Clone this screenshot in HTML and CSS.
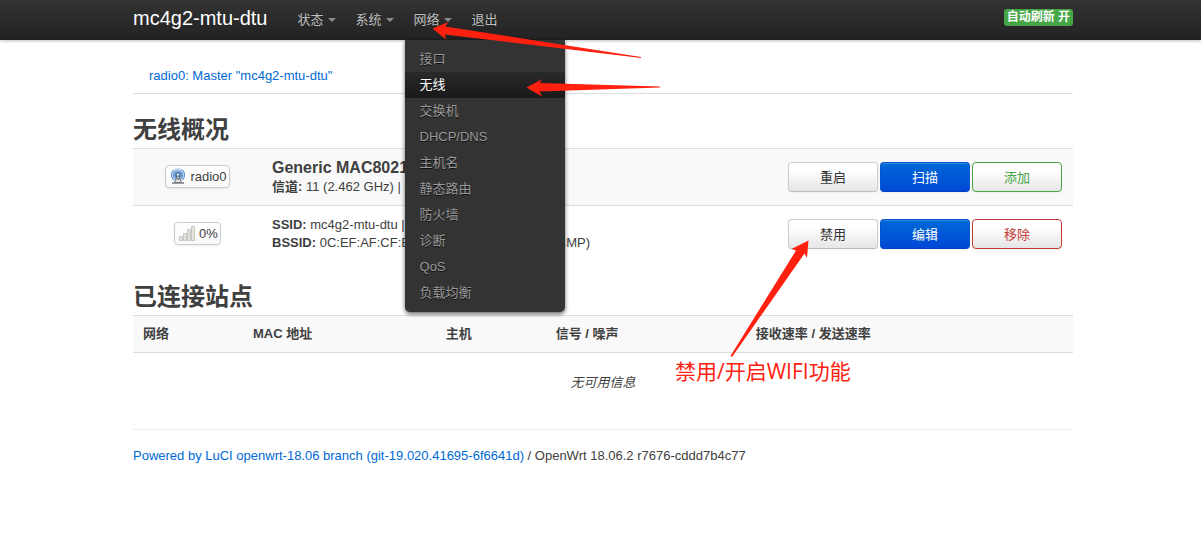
FILE: index.html
```html
<!DOCTYPE html>
<html lang="zh-CN">
<head>
<meta charset="utf-8">
<title>mc4g2-mtu-dtu - 无线 - LuCI</title>
<link rel="stylesheet" href="styles.css">
</head>
<body>
<header class="topbar">
  <div class="container topbar-inner">
    <a class="brand" href="#">mc4g2-mtu-dtu</a>
    <ul class="nav">
      <li><a class="nav-link has-menu" href="#">状态</a></li>
      <li><a class="nav-link has-menu" href="#">系统</a></li>
      <li class="open"><a class="nav-link has-menu" href="#">网络</a>
        <ul class="menu">
          <li><a href="#">接口</a></li>
          <li><a class="current" href="#">无线</a></li>
          <li><a href="#">交换机</a></li>
          <li><a href="#">DHCP/DNS</a></li>
          <li><a href="#">主机名</a></li>
          <li><a href="#">静态路由</a></li>
          <li><a href="#">防火墙</a></li>
          <li><a href="#">诊断</a></li>
          <li><a href="#">QoS</a></li>
          <li><a href="#">负载均衡</a></li>
        </ul>
      </li>
      <li><a class="nav-link" href="#">退出</a></li>
    </ul>
    <button class="refresh" type="button">自动刷新 开</button>
  </div>
</header>

<main class="container">
  <nav class="tabs"><a href="#">radio0: Master "mc4g2-mtu-dtu"</a></nav>

  <section>
    <h2>无线概况</h2>
    <table class="overview">
      <tr class="shaded">
        <td class="status">
          <span class="badge">
            <svg width="16" height="16" viewBox="0 0 16 16" aria-hidden="true">
              <circle cx="8" cy="7" r="7" fill="#c3d8f0"/>
              <circle cx="8" cy="7" r="5" fill="#8fb4df"/>
              <circle cx="8" cy="7" r="3" fill="#4778b5"/>
              <path d="M3.6 1.8a7 7 0 0 0 0 10.2M12.4 1.8a7 7 0 0 1 0 10.2M5.1 3.4a5 5 0 0 0 0 7.2M10.9 3.4a5 5 0 0 1 0 7.2" fill="none" stroke="#5b8fcb"/>
              <path d="M8 7 4.5 14.5h7z" fill="#e4e5e6" stroke="#73777c"/>
              <path d="M6.5 11h3M2 15h12" stroke="#777b80" stroke-width="1.4"/>
              <circle cx="8" cy="6.5" r="1.5" fill="#eef4fa" stroke="#3e6696" stroke-width=".6"/>
            </svg>
            radio0
          </span>
        </td>
        <td class="details"><strong class="device">Generic MAC80211 802.11bgn</strong><br><strong>信道:</strong> 11 (2.462 GHz) | <strong>速率:</strong> 1 Mbit/s</td>
        <td class="actions"><div class="buttons">
          <button class="btn" type="button">重启</button>
          <button class="btn primary" type="button">扫描</button>
          <button class="btn add" type="button">添加</button>
        </div></td>
      </tr>
      <tr>
        <td class="status">
          <span class="badge">
            <svg width="16" height="16" viewBox="0 0 16 16" aria-hidden="true">
              <g fill="#e3e4df" stroke="#c6c8c2">
                <path d="M.5 11.5h3v4h-3zM4.500 8.500h3v7h-3zM8.500 4.500h3v11h-3zM12.500 1.500h3v14h-3z"/>
              </g>
            </svg>
            0%
          </span>
        </td>
        <td class="details"><strong>SSID:</strong> mc4g2-mtu-dtu | <strong>模式:</strong> Master<br><strong>BSSID:</strong> 0C:EF:AF:CF:EA:0A | <strong>加密:</strong> WPA PSK (CCMP)</td>
        <td class="actions"><div class="buttons">
          <button class="btn" type="button">禁用</button>
          <button class="btn primary" type="button">编辑</button>
          <button class="btn remove" type="button">移除</button>
        </div></td>
      </tr>
    </table>
  </section>

  <section>
    <h2>已连接站点</h2>
    <table class="stations">
      <thead>
        <tr class="shaded">
          <th class="col-network">网络</th>
          <th class="col-mac">MAC 地址</th>
          <th class="col-host">主机</th>
          <th class="col-signal">信号 / 噪声</th>
          <th>接收速率 / 发送速率</th>
        </tr>
      </thead>
      <tbody>
        <tr><td class="empty" colspan="5"><em>无可用信息</em></td></tr>
      </tbody>
    </table>
  </section>

  <footer><a href="#">Powered by LuCI openwrt-18.06 branch (git-19.020.41695-6f6641d)</a> / OpenWrt 18.06.2 r7676-cddd7b4c77</footer>
</main>

<div class="notes">
  <div class="container notes-inner">
    <svg class="arrows" width="940" height="400" viewBox="133 0 940 400" aria-hidden="true">
      <g fill="#ff2010">
        <path d="M432.500 28.500 448.500 22 445 26.500 641 57v1L445 34.500 446 39.500z"/>
        <path d="M526.500 87.500 542.500 79 539.500 83 660 86.500v1L539.500 91.500 542 96.500z"/>
        <path d="M808.500 240.500 791.500 249 796 250.500 730.500 356l1.500 1L804.500 253.500 807 258z"/>
      </g>
    </svg>
    <p class="caption">禁用/开启WIFI功能</p>
  </div>
</div>
</body>
</html>
```

FILE: styles.css
```css
* { box-sizing: border-box; }

body {
  margin: 0;
  background: #fff;
  color: #404040;
  font: 13px/18px "Liberation Sans", "Noto Sans CJK SC", sans-serif;
}

a { color: #0069d6; text-decoration: none; }
ul { list-style: none; margin: 0; padding: 0; }
button { font: inherit; cursor: pointer; }

.container {
  max-width: 945px;
  margin: 0 auto;
  padding-left: 5px;
}

/* top bar */
.topbar {
  position: relative;
  z-index: 1;
  height: 40px;
  background: linear-gradient(#333, #222);
  box-shadow: 0 1px 3px rgba(0, 0, 0, .25), inset 0 -1px 0 rgba(0, 0, 0, .1);
}
.topbar-inner { display: flex; align-items: flex-start; }
.brand {
  padding: 8px 20px 12px 0;
  color: #fff;
  font-size: 20px;
  line-height: 20px;
}
.nav { display: flex; }
.nav > li { position: relative; }
.nav-link {
  display: flex;
  align-items: center;
  padding: 10px;
  color: #bfbfbf;
  line-height: 20px;
  text-shadow: 0 -1px 0 rgba(0, 0, 0, .25);
}
.has-menu::after {
  content: "";
  margin-left: 4px;
  border: 4px solid transparent;
  border-top-color: #8a8a8a;
  border-bottom: 0;
}
.menu {
  position: absolute;
  top: 40px;
  left: 1px;
  width: 160px;
  padding: 6px 0;
  background: #333;
  border-radius: 0 0 5px 5px;
  box-shadow: 0 2px 4px rgba(0, 0, 0, .6);
}
.menu a {
  display: block;
  padding: 4px 15px;
  color: #999;
  text-shadow: 0 1px 0 #111;
}
.menu .current {
  color: #fff;
  background: linear-gradient(#292929, #191919);
}
.refresh {
  margin: 9px 0 0 auto;
  padding: 0 3px;
  border: 0;
  border-radius: 3px;
  background: #46a546;
  color: #fff;
  font-size: 12px;
  font-weight: bold;
  line-height: 17px;
}

/* content */
.tabs {
  padding: 27px 16px 8px;
  border-bottom: 1px solid #ddd;
  margin-bottom: 18px;
}
section { margin-bottom: 17px; }
h2 {
  margin: 0;
  font-size: 24px;
  line-height: 36px;
}
table {
  width: 100%;
  border-spacing: 0;
}
td, th {
  border-top: 1px solid #ddd;
  text-align: left;
}
.stations th { border-bottom: 1px solid #ddd; }
.shaded { background: #f9f9f9; }

.overview td { height: 57px; padding: 0; }
.overview .status { width: 129px; text-align: center; }
.overview .details { padding-left: 10px; white-space: nowrap; }
.overview .actions { padding-right: 11px; }
.device { font-size: 16px; }
.badge {
  display: inline-flex;
  align-items: center;
  gap: 4px;
  padding: 2px;
  padding-left: 4px;
  border: 1px solid #ccc;
  border-radius: 4px;
  background: linear-gradient(#fff, #f9f9f9);
  line-height: 17px;
  box-shadow: 0 1px 2px rgba(0, 0, 0, .08);
}
.buttons { display: flex; justify-content: flex-end; gap: 2px; }
.btn {
  width: 90px;
  height: 30px;
  padding: 2px 0 0;
  border: 1px solid #ccc;
  border-bottom-color: #bbb;
  border-radius: 4px;
  background: linear-gradient(#fff 25%, #e6e6e6);
  color: #333;
  box-shadow: inset 0 1px 0 rgba(255, 255, 255, .2), 0 1px 2px rgba(0, 0, 0, .05);
}
.primary {
  border-color: #0054cc;
  border-bottom-color: #003fc0;
  background: linear-gradient(#0069d6, #0048d6);
  color: #fff;
}
.add { border-color: #46a546; color: #46a546; }
.remove { border-color: #c43c35; color: #c43c35; }

.stations { table-layout: fixed; }
.stations th { height: 38px; padding: 0 10px; }
.col-network, .col-host { width: 11.7%; }
.col-mac { width: 20.5%; }
.col-signal { width: 21.3%; }
.stations .empty { height: 59px; padding: 0; border-top: 0; text-align: center; }

footer {
  padding: 17px 0;
  border-top: 1px solid #eee;
}

/* annotations over the page */
.notes {
  position: absolute;
  z-index: 2;
  top: 0;
  left: 0;
  right: 0;
  pointer-events: none;
}
.notes-inner { position: relative; }
.arrows { display: block; }
.caption {
  position: absolute;
  top: 356px;
  left: 547px;
  margin: 0;
  color: #ff2010;
  font: 21px/30px "Open Sans", "Noto Sans CJK SC", sans-serif;
}
```
